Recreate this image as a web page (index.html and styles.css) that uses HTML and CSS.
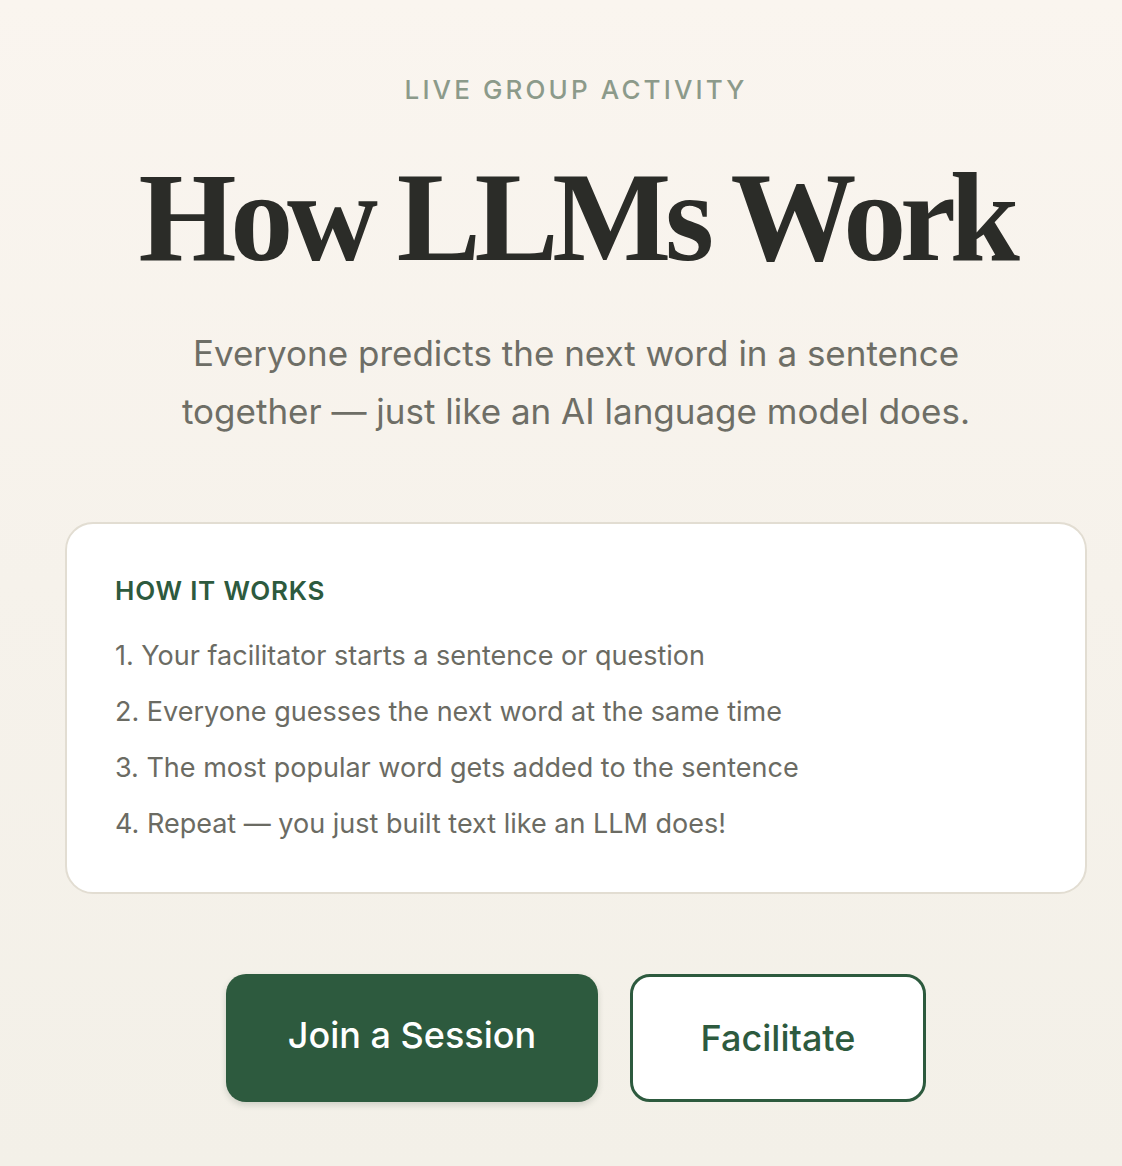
FILE: index.html
```html
<!DOCTYPE html>
<html lang="en">
<head>
<meta charset="utf-8">
<title>How LLMs Work</title>
<link rel="stylesheet" href="styles.css">
</head>
<body>
<main class="page">
  <p class="eyebrow">LIVE GROUP ACTIVITY</p>
  <h1 class="title">How LLMs Work</h1>
  <p class="subtitle">Everyone predicts the next word in a sentence<br>together — just like an AI language model does.</p>
  <section class="card">
    <h2 class="card-title">HOW IT WORKS</h2>
    <ol class="steps">
      <li>1. Your facilitator starts a sentence or question</li>
      <li>2. Everyone guesses the next word at the same time</li>
      <li>3. The most popular word gets added to the sentence</li>
      <li>4. Repeat — you just built text like an LLM does!</li>
    </ol>
  </section>
  <div class="actions">
    <button class="btn btn-primary">Join a Session</button>
    <button class="btn btn-outline">Facilitate</button>
  </div>
</main>
</body>
</html>
```

FILE: styles.css
```css
html, body {
  margin: 0;
  padding: 0;
}
body {
  min-height: 1166px;
  background: linear-gradient(180deg, #faf5ef 0%, #f6f2eb 50%, #f3f0e8 100%);
  font-family: "Inter", "Open Sans", sans-serif;
  color: #2b2b28;
  overflow: hidden;
}
.page {
  width: 1022px;
  margin-left: 65px;
  padding-top: 74px;
  display: flex;
  flex-direction: column;
  align-items: center;
}
.eyebrow {
  margin: 0;
  font-size: 26px;
  line-height: 32px;
  font-weight: 500;
  letter-spacing: 0.12em;
  color: #8c9a8a;
}
.title {
  margin: 42px 0 0;
  font-family: "Liberation Serif", "DejaVu Serif", serif;
  font-weight: 700;
  font-size: 126px;
  line-height: 140px;
  letter-spacing: -0.05em;
  color: #2b2c28;
}
.subtitle {
  margin: 36px 0 0;
  text-align: center;
  font-size: 35px;
  line-height: 58px;
  font-weight: 400;
  color: #6e6e66;
}
.card {
  align-self: stretch;
  margin-top: 82px;
  background: #ffffff;
  border: 2px solid #e2ddd2;
  border-radius: 28px;
  padding: 50px 48px 51px;
}
.card-title {
  margin: 0;
  font-size: 26px;
  line-height: 34px;
  font-weight: 600;
  letter-spacing: 0.03em;
  color: #2d5a3e;
}
.steps {
  list-style: none;
  margin: 31px 0 0;
  padding: 0;
  display: flex;
  flex-direction: column;
  gap: 22px;
}
.steps li {
  font-size: 27px;
  line-height: 34px;
  color: #6b6b63;
}
.actions {
  margin-top: 80px;
  display: flex;
  gap: 32px;
}
.btn {
  font-family: "Inter", "Open Sans", sans-serif;
  font-size: 36px;
  font-weight: 500;
  height: 128px;
  border-radius: 20px;
  cursor: pointer;
}
.btn-primary {
  width: 372px;
  background: #2d5a3e;
  color: #ffffff;
  border: none;
  padding-bottom: 8px;
  box-shadow: 0 3px 6px rgba(45, 60, 45, 0.18);
}
.btn-outline {
  width: 296px;
  background: #ffffff;
  color: #2d5a3e;
  border: 3px solid #2d5a3e;
}
```
